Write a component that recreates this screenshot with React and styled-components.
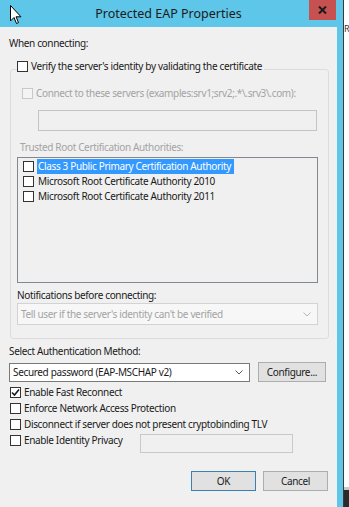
import React from 'react';
import styled, { createGlobalStyle } from 'styled-components';

const GlobalStyle = createGlobalStyle`
  html, body {
    margin: 0;
    padding: 0;
    background: #ffffff;
  }
  body {
    font-family: 'Noto Sans', 'Open Sans', sans-serif;
    font-size: 10px;
    letter-spacing: -0.35px;
    color: #1a1a1a;
  }
`;

const Screen = styled.div`
  width: 349px;
  height: 507px;
  display: flex;
  overflow: hidden;
`;

const Window = styled.div`
  width: 343px;
  flex-shrink: 0;
  display: flex;
  flex-direction: column;
  background: #5ec6e9;
  padding-right: 6px;
  box-sizing: border-box;
`;

const TitleBar = styled.div`
  position: relative;
  height: 27px;
  display: grid;
  grid-template-columns: 1fr auto 1fr;
  align-items: start;
  margin-right: -6px;
`;

const Title = styled.div`
  grid-column: 2;
  font-size: 12.5px;
  letter-spacing: 0;
  line-height: 27px;
  color: #1b1b1b;
  margin-right: 6px;
`;

const CloseButton = styled.div`
  grid-column: 3;
  justify-self: end;
  width: 27px;
  height: 20px;
  margin-right: 7px;
  background: #c75050;
  display: flex;
  align-items: center;
  justify-content: center;
`;

const Cursor = styled.svg`
  position: absolute;
  left: 10px;
  top: 5px;
`;

const Body = styled.div`
  flex: 1;
  background: #f0f0f0;
  padding: 9px 0 0 9px;
  display: flex;
  flex-direction: column;
  align-items: flex-start;
`;

const Label = styled.div`
  line-height: 14px;
  height: 14px;
  white-space: nowrap;
  color: ${({ muted }) => (muted ? '#a3a3a3' : '#1a1a1a')};
  margin-top: ${({ top }) => top || 0}px;
  padding-left: ${({ indent }) => indent || 0}px;
`;

const Group = styled.fieldset`
  margin: 9px 0 0 1px;
  width: 319px;
  box-sizing: border-box;
  border: 1px solid #dcdcdc;
  border-radius: 3px;
  padding: 0 10px 13px 6px;
  display: flex;
  flex-direction: column;
  align-items: flex-start;
`;

const Legend = styled.legend`
  display: flex;
  align-items: flex-start;
  gap: 3px;
  padding: 0 2px 0 0;
  margin-left: 0;
  height: 20px;
  line-height: 14px;
  white-space: nowrap;
`;

const LegendText = styled.span`
  display: flex;
  align-items: center;
  gap: 3px;
  height: 14px;
`;

const Box = styled.span`
  width: 11px;
  height: 11px;
  flex-shrink: 0;
  box-sizing: border-box;
  border: 1px solid ${({ disabled }) => (disabled ? '#c9c9c9' : '#333333')};
  background: ${({ disabled }) => (disabled ? '#f4f4f4' : '#ffffff')};
  display: flex;
  align-items: center;
  justify-content: center;
`;

const CheckRow = styled.div`
  display: flex;
  align-items: center;
  gap: ${({ gap }) => gap || 3}px;
  height: ${({ h }) => h || 14}px;
  line-height: 14px;
  white-space: nowrap;
  color: ${({ disabled }) => (disabled ? '#a3a3a3' : '#1a1a1a')};
  margin-top: ${({ top }) => top || 0}px;
  padding-left: ${({ indent }) => indent || 0}px;
`;

const TextBox = styled.div`
  box-sizing: border-box;
  width: ${({ w }) => w}px;
  height: ${({ h }) => h}px;
  margin-top: ${({ top }) => top || 0}px;
  margin-left: ${({ left }) => left || 0}px;
  border: 1px solid ${({ disabled }) => (disabled ? '#c4c4c4' : '#c9c9c9')};
  background: #f0f0f0;
`;

const ListBox = styled.div`
  box-sizing: border-box;
  width: 301px;
  height: 126px;
  margin-top: 3px;
  border: 1px solid #828790;
  background: #f0f0f0;
  padding: 1px 0 0 5px;
  display: flex;
  flex-direction: column;
`;

const ListItem = styled.div`
  display: flex;
  align-items: center;
  gap: 3px;
  height: 15px;
  white-space: nowrap;
`;

const ItemText = styled.span`
  padding: 0 1px;
  line-height: 15px;
  background: ${({ selected }) => (selected ? '#3399ff' : 'transparent')};
  color: ${({ selected }) => (selected ? '#ffffff' : '#1a1a1a')};
  min-width: ${({ selected }) => (selected ? '197px' : '0')};
  box-sizing: border-box;
`;

const Combo = styled.div`
  box-sizing: border-box;
  width: ${({ w }) => w}px;
  height: ${({ h }) => h}px;
  margin-top: ${({ top }) => top || 0}px;
  border: 1px solid ${({ disabled }) => (disabled ? '#d3d3d3' : '#7a7a7a')};
  background: ${({ disabled }) => (disabled ? '#f7f7f7' : '#ffffff')};
  color: ${({ disabled }) => (disabled ? '#a3a3a3' : '#1a1a1a')};
  display: flex;
  align-items: center;
  justify-content: space-between;
  padding: 0 6px 0 3px;
  white-space: nowrap;
`;

const MethodRow = styled.div`
  display: flex;
  align-items: center;
  gap: 8px;
  margin-top: 4px;
  height: 20px;
`;

const Button = styled.div`
  box-sizing: border-box;
  width: ${({ w }) => w}px;
  height: 20px;
  border: 1px solid ${({ primary }) => (primary ? '#3c7fb1' : '#adadad')};
  background: #e1e1e1;
  display: flex;
  align-items: center;
  justify-content: center;
  white-space: nowrap;
`;

const Options = styled.div`
  margin: 2px 0 0 1px;
  display: flex;
  flex-direction: column;
`;

const Footer = styled.div`
  align-self: stretch;
  display: flex;
  justify-content: flex-end;
  gap: 7px;
  margin-top: 23px;
  padding-right: 9px;
`;

const Backdrop = styled.div`
  flex: 1;
  display: flex;
  flex-direction: column;
  border-left: 1px solid #3a3a3a;
  background: #ffffff;
`;

const BackdropTop = styled.div`
  flex: 1;
  font-size: 9px;
  padding-top: 22px;
  color: #333;
  overflow: hidden;
`;

const Taskbar = styled.div`
  height: 17px;
  border-top: 3px solid #c8c8c8;
  background: #2b2b2b;
`;

function Chevron({ color }) {
  return (
    <svg width="8" height="5" viewBox="0 0 8 5">
      <path d="M0.5 0.5 L4 4 L7.5 0.5" fill="none" stroke={color} strokeWidth="1" />
    </svg>
  );
}

function Check({ checked, disabled }) {
  return (
    <Box disabled={disabled}>
      {checked && (
        <svg width="9" height="9" viewBox="0 0 9 9">
          <path d="M1 4.5 L3.5 7 L8 1.5" fill="none" stroke="#1a1a1a" strokeWidth="1.6" />
        </svg>
      )}
    </Box>
  );
}

const authorities = [
  'Class 3 Public Primary Certification Authority',
  'Microsoft Root Certificate Authority 2010',
  'Microsoft Root Certificate Authority 2011',
];

export default function App() {
  return (
    <>
      <GlobalStyle />
      <Screen>
        <Window>
          <TitleBar>
            <Cursor width="12" height="20" viewBox="0 0 12 20">
              <path d="M0.5 0.5 L0.5 16 L4 12.5 L6.5 18.5 L8.5 17.6 L6 11.8 L11 11.8 Z" fill="#ffffff" stroke="#000000" strokeWidth="1" />
            </Cursor>
            <Title>Protected EAP Properties</Title>
            <CloseButton>
              <svg width="9" height="8" viewBox="0 0 9 8">
                <path d="M1 0.5 L8 7.5 M8 0.5 L1 7.5" stroke="#1b1b1b" strokeWidth="2" />
              </svg>
            </CloseButton>
          </TitleBar>
          <Body>
            <Label>When connecting:</Label>
            <Group>
              <Legend>
                <LegendText>
                  <Check />
                  Verify the server's identity by validating the certificate
                </LegendText>
              </Legend>
              <CheckRow disabled top={7} indent={5}>
                <Check disabled />
                Connect to these servers (examples:srv1;srv2;.*\.srv3\.com):
              </CheckRow>
              <TextBox disabled w={279} h={21} top={10} left={21} />
              <Label muted top={9} indent={3}>Trusted Root Certification Authorities:</Label>
              <ListBox>
                {authorities.map((name, i) => (
                  <ListItem key={name}>
                    <Check />
                    <ItemText selected={i === 0}>{name}</ItemText>
                  </ListItem>
                ))}
              </ListBox>
              <Label top={5}>Notifications before connecting:</Label>
              <Combo disabled w={301} h={22} top={1}>
                Tell user if the server's identity can't be verified
                <Chevron color="#b5b5b5" />
              </Combo>
            </Group>
            <Label top={5}>Select Authentication Method:</Label>
            <MethodRow>
              <Combo w={241} h={19}>
                Secured password (EAP-MSCHAP v2)
                <Chevron color="#555555" />
              </Combo>
              <Button w={68}>Configure...</Button>
            </MethodRow>
            <Options>
              <CheckRow h={16}>
                <Check checked />
                Enable Fast Reconnect
              </CheckRow>
              <CheckRow h={16}>
                <Check />
                Enforce Network Access Protection
              </CheckRow>
              <CheckRow h={16}>
                <Check />
                Disconnect if server does not present cryptobinding TLV
              </CheckRow>
              <CheckRow h={16}>
                <Check />
                Enable Identity Privacy
                <TextBox w={153} h={19} top={7} left={15} />
              </CheckRow>
            </Options>
            <Footer>
              <Button primary w={65}>OK</Button>
              <Button w={65}>Cancel</Button>
            </Footer>
          </Body>
        </Window>
        <Backdrop>
          <BackdropTop>R</BackdropTop>
          <Taskbar />
        </Backdrop>
      </Screen>
    </>
  );
}
